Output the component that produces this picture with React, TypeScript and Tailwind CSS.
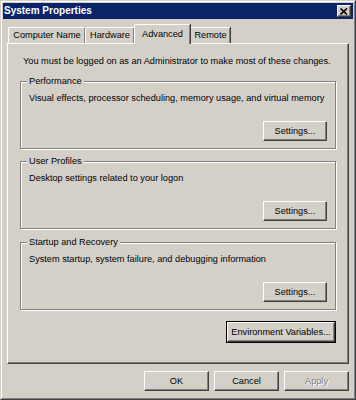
import React from "react";

const FONT = "font-['Liberation_Sans',Arial,sans-serif]";

function Btn({
  children,
  w,
  disabled,
}: {
  children: React.ReactNode;
  w: string;
  disabled?: boolean;
}) {
  return (
    <div
      className={`${w} h-[20px] flex items-center justify-center border border-t-white border-l-white border-r-[#404040] border-b-[#404040] shadow-[inset_-1px_-1px_0_#808080] bg-[#d4d0c8] text-[9.2px] leading-[11px] whitespace-nowrap ${
        disabled ? "text-[#808080] [text-shadow:1px_1px_0_#ffffff]" : "text-black"
      }`}
    >
      {children}
    </div>
  );
}

function Group({ title, desc, mt }: { title: string; desc: string; mt: string }) {
  return (
    <div
      className={`relative ${mt} h-[68px] border border-[#808080] shadow-[1px_1px_0_#ffffff,inset_1px_1px_0_#ffffff] flex flex-col px-[8px] pt-[11px]`}
    >
      <span className="absolute -top-[6px] left-[6px] px-[2px] bg-[#d4d0c8] text-[9.2px] leading-[11px] whitespace-nowrap">
        {title}
      </span>
      <div className="text-[9.2px] leading-[11px] whitespace-nowrap">{desc}</div>
      <div className="flex justify-end mt-[17px]">
        <Btn w="w-[64px]">Settings...</Btn>
      </div>
    </div>
  );
}

function Tab({
  label,
  w,
  selected,
}: {
  label: string;
  w: string;
  selected?: boolean;
}) {
  if (selected) {
    return (
      <div
        className={`${w} h-[20px] -mb-px relative z-10 bg-[#d4d0c8] border-l border-t border-white rounded-tl-[2px] shadow-[inset_-1px_0_0_#808080,1px_0_0_#404040] flex items-start justify-center pt-[4px] text-[9.2px] leading-[11px] whitespace-nowrap`}
      >
        {label}
      </div>
    );
  }
  return (
    <div
      className={`${w} h-[16px] bg-[#d4d0c8] border-l border-t border-white rounded-tl-[2px] shadow-[inset_-1px_0_0_#808080,1px_0_0_#404040] flex items-center justify-center text-[9.2px] leading-[11px] whitespace-nowrap`}
    >
      {label}
    </div>
  );
}

export default function App() {
  return (
    <div className={`${FONT} w-[356px] h-[400px] text-black`}>
      <div className="w-full h-full border border-t-[#d4d0c8] border-l-[#d4d0c8] border-r-[#404040] border-b-[#404040] bg-[#d4d0c8]">
        <div className="w-full h-full border border-t-white border-l-white border-r-[#808080] border-b-[#808080] p-[1px] flex flex-col">
          {/* Title bar */}
          <div className="h-[16px] bg-[#0a246a] flex items-center justify-between pl-[1px] pr-[2px]">
            <span className="text-white font-bold text-[10px] leading-[12px]">
              System Properties
            </span>
            <div className="w-[14px] h-[12px] bg-[#d4d0c8] border border-t-white border-l-white border-r-[#404040] border-b-[#404040] shadow-[inset_-1px_-1px_0_#808080] flex items-center justify-center">
              <svg width="8" height="7" viewBox="0 0 8 7">
                <path d="M0.5 0.5 L7 6.5 M7 0.5 L0.5 6.5" stroke="#000" strokeWidth="1.6" />
              </svg>
            </div>
          </div>

          {/* Body */}
          <div className="flex-1 flex flex-col px-[4px] pt-[5px]">
            <div className="h-[19px] flex items-end pl-[1px]">
              <Tab label="Computer Name" w="w-[77px]" />
              <Tab label="Hardware" w="w-[49px]" />
              <Tab label="Advanced" w="w-[56px]" selected />
              <Tab label="Remote" w="w-[40px]" />
            </div>
            <div className="h-[321px] border border-t-white border-l-white border-r-[#404040] border-b-[#404040] shadow-[inset_-1px_-1px_0_#808080] flex flex-col pl-[12px] pr-[12px] pt-[12px]">
              <div className="pl-[3px] text-[9.2px] leading-[11px] whitespace-nowrap">
                You must be logged on as an Administrator to make most of these changes.
              </div>
              <Group
                mt="mt-[14px]"
                title="Performance"
                desc="Visual effects, processor scheduling, memory usage, and virtual memory"
              />
              <Group
                mt="mt-[12px]"
                title="User Profiles"
                desc="Desktop settings related to your logon"
              />
              <Group
                mt="mt-[13px]"
                title="Startup and Recovery"
                desc="System startup, system failure, and debugging information"
              />
              <div className="flex justify-end mt-[11px]">
                <div className="border border-black">
                  <Btn w="w-[108px]">Environment Variables...</Btn>
                </div>
              </div>
            </div>
            <div className="flex justify-end gap-[5px] mt-[7px]">
              <Btn w="w-[65px]">OK</Btn>
              <Btn w="w-[65px]">Cancel</Btn>
              <Btn w="w-[65px]" disabled>
                Apply
              </Btn>
            </div>
          </div>
        </div>
      </div>
    </div>
  );
}
